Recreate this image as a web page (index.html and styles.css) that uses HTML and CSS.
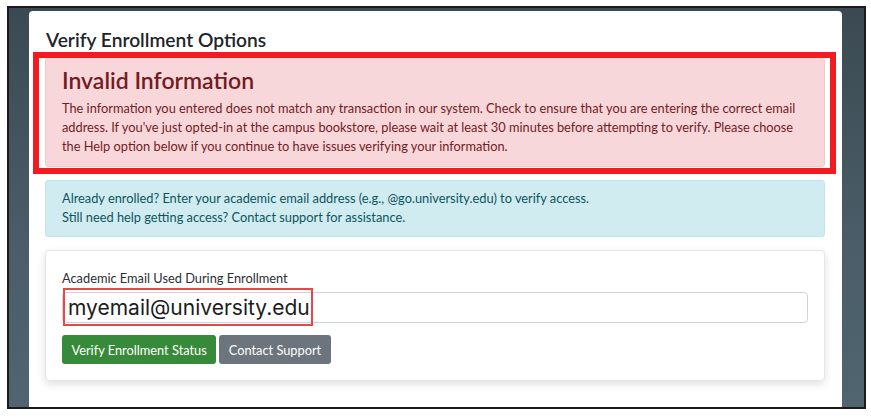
FILE: index.html
```html
<!DOCTYPE html>
<html lang="en">
<head>
<meta charset="utf-8">
<title>Verify Enrollment Options</title>
<link rel="stylesheet" href="styles.css">
</head>
<body>
<div class="frame">
  <div class="card">
    <h4 class="card-title">Verify Enrollment Options</h4>
    <div class="alert alert-danger">
      <span class="annot-box"></span>
      <h3 class="alert-heading">Invalid Information</h3>
      <p class="alert-text">The information you entered does not match any transaction in our system. Check to ensure that you are entering the correct email address. If you've just opted-in at the campus bookstore, please wait at least 30 minutes before attempting to verify. Please choose the Help option below if you continue to have issues verifying your information.</p>
    </div>
    <div class="alert alert-info">
      <p class="alert-text">Already enrolled? Enter your academic email address (e.g., @go.university.edu) to verify access.<br>Still need help getting access? Contact support for assistance.</p>
    </div>
    <div class="form-card">
      <label class="form-label" for="email">Academic Email Used During Enrollment</label>
      <div class="input-wrap">
        <input class="form-input" id="email" type="email" value="myemail@university.edu">
        <span class="annot-input"></span>
      </div>
      <div class="btn-row">
        <button class="btn btn-success" type="button">Verify Enrollment Status</button>
        <button class="btn btn-secondary" type="button">Contact Support</button>
      </div>
    </div>
  </div>
</div>
</body>
</html>
```
FILE: styles.css
```css
* { box-sizing: border-box; }
html, body { margin: 0; padding: 0; background: #ffffff; }
body {
  font-family: "Lato", "Open Sans", "Liberation Sans", sans-serif;
  font-size: 12.8px;
  line-height: 1.5;
  color: #212529;
}
.frame {
  margin: 6px 0 0 7px;
  width: 859px;
  height: 403px;
  border: 2px solid #1b1b1b;
  overflow: hidden;
  background: linear-gradient(180deg, #3b4a52 0%, #4a5d68 60%, #506570 100%);
  padding: 3px 0 0 20px;
}
.card {
  width: 813px;
  min-height: 420px;
  background: #ffffff;
  border-radius: 4px 4px 0 0;
  padding: 17px 17px 0 16px;
}
.card-title {
  margin: 0 0 6px 1px;
  font-size: 19.2px;
  line-height: 23px;
  font-weight: 600;
  color: #212529;
}
.alert {
  position: relative;
  border: 1px solid transparent;
  border-radius: 3px;
  margin-bottom: 13px;
}
.alert-danger {
  background: #f8d7da;
  border-color: #f5c6cb;
  color: #721c24;
  padding: 9px 16px 10px 16px;
}
.alert-info {
  background: #d1ecf1;
  border-color: #bee5eb;
  color: #0c5460;
  padding: 8px 16px 9px 16px;
}
.alert-heading {
  margin: 0 0 5px 0;
  font-size: 23px;
  line-height: 27px;
  font-weight: 600;
  color: #721c24;
}
.alert-text {
  margin: 0;
  line-height: 19px;
}
.annot-box {
  position: absolute;
  left: -13px;
  right: -12px;
  top: -6px;
  bottom: -8px;
  border: 6px solid #f01c22;
  pointer-events: none;
}
.form-card {
  border: 1px solid #e4e6e8;
  border-radius: 4px;
  box-shadow: 0 3px 8px rgba(0, 0, 0, 0.13);
  padding: 18px 16px 16px 16px;
}
.form-label {
  display: block;
  line-height: 19px;
  margin-bottom: 4px;
  color: #2b2f33;
}
.input-wrap {
  position: relative;
}
.form-input {
  display: block;
  width: 100%;
  height: 31px;
  padding: 0 5px;
  border: 1px solid #ced4da;
  border-radius: 4px;
  font-family: "Inter", "Open Sans", sans-serif;
  font-size: 21px;
  color: #1c1c1c;
  background: #ffffff;
  outline: none;
}
.annot-input {
  position: absolute;
  left: 1px;
  top: -4px;
  width: 250px;
  height: 38px;
  border: 2px solid #e5484a;
  pointer-events: none;
}
.btn-row {
  display: flex;
  gap: 3px;
  margin-top: 12px;
}
.btn {
  height: 29px;
  padding: 0 9.5px;
  border: none;
  border-radius: 3px;
  font-family: "Lato", "Open Sans", sans-serif;
  font-size: 12.8px;
  color: #ffffff;
  cursor: pointer;
}
.btn-success { background: #388a3b; }
.btn-secondary { background: #6c757d; }
```
